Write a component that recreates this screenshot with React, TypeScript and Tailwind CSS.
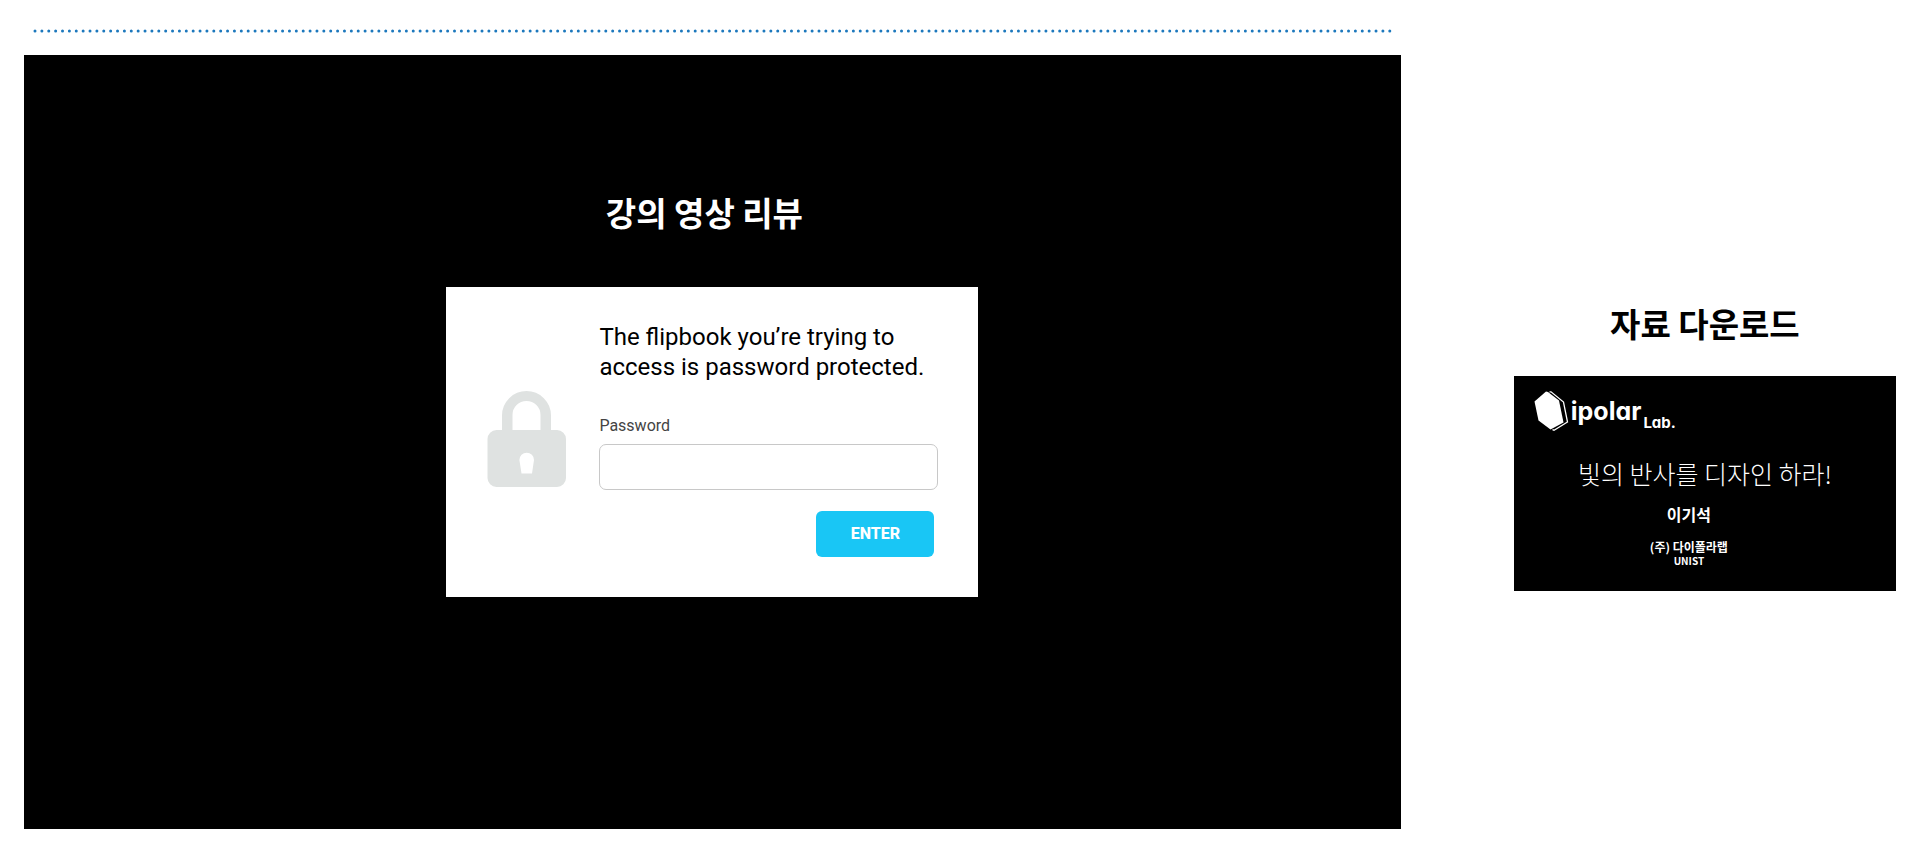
import React from "react";

function DottedRule() {
  return (
    <svg className="block h-1 w-full overflow-visible" aria-hidden="true">
      <line
        x1="0"
        y1="2"
        x2="100%"
        y2="2"
        pathLength={197}
        stroke="#1c78bd"
        strokeWidth="3"
        strokeLinecap="round"
        strokeDasharray="0 1"
      />
    </svg>
  );
}

function LockIcon() {
  return (
    <svg className="h-24 w-20 shrink-0" viewBox="0 0 80 96" fill="#dfe2e1" aria-hidden="true">
      <path
        fillRule="evenodd"
        d="M15 39V24.500a24.500 24.500 0 0 1 49 0V39h6a9 9 0 0 1 9 9v39a9 9 0 0 1-9 9H9.500a9 9 0 0 1-9-9V48a9 9 0 0 1 9-9zM25.500 39h28V24a14 14 0 0 0-28 0zM34.500 82.500h10.500l2-13.500a7.300 7.300 0 1 0-14.600 0z"
      />
    </svg>
  );
}

function LogoMark() {
  return (
    <svg className="h-10 w-[35px] shrink-0" viewBox="0 0 35 40" aria-hidden="true">
      <path d="M12 0.500L0.500 10.500L4.500 29.500L16.500 38.500L29.500 31.500L25 9.500L14 1z" fill="#fff" />
      <path d="M15.500 0.800L17 0.800L29.500 11L33.500 31L20 39.200L18.500 38.600" fill="none" stroke="#fff" strokeWidth="1.300" />
    </svg>
  );
}

function PasswordCard() {
  return (
    <form
      className="flex w-full max-w-[532px] items-end gap-8 bg-white pt-[35px] pr-10 pb-10 pl-[41px] font-[Roboto,sans-serif]"
      onSubmit={(e) => e.preventDefault()}
    >
      <div className="pb-[70px]">
        <LockIcon />
      </div>
      <div className="flex grow flex-col">
        <h2 className="text-2xl leading-[30px] font-[450] text-black">
          The flipbook you’re trying to
          <br />
          access is password protected.
        </h2>
        <label htmlFor="password" className="mt-8 text-base leading-6 text-[#444]">
          Password
        </label>
        <input
          id="password"
          type="password"
          className="mt-1.5 h-[46px] w-full rounded-[7px] border border-[#c8c8c8] bg-white px-3 outline-none"
        />
        <button
          type="submit"
          className="mt-[21px] mr-1 h-[46px] w-[118px] self-end rounded-md bg-[#19c6f5] text-base font-extrabold text-white"
        >
          ENTER
        </button>
      </div>
    </form>
  );
}

function DownloadCard() {
  return (
    <a href="#download" className="block aspect-video w-full bg-black px-5 pt-[15px] text-white">
      <div className="flex font-[Inter,sans-serif] font-bold [font-feature-settings:'cv11']">
        <LogoMark />
        <span className="mt-1 ml-0.5 text-[25px] leading-8">ipolar</span>
        <span className="mt-5 ml-0.5 text-[15px] leading-6">Lab.</span>
      </div>
      <div className="mt-[22px] text-center text-[25px] leading-8 font-light">빛의 반사를 디자인 하라!</div>
      <div className="flex flex-col items-center pr-8 font-bold">
        <span className="mt-[13px] text-base leading-6">이기석</span>
        <span className="mt-[13px] text-xs leading-4">(주) 다이폴라랩</span>
        <span className="text-[10px] leading-3">UNIST</span>
      </div>
    </a>
  );
}

function App() {
  return (
    <main className="grid min-h-screen grid-cols-[1376fr_382fr] items-start gap-x-[113px] bg-white px-6 pt-[29px] pb-4 font-['Noto_Sans_CJK_KR',sans-serif]">
      <section className="flex flex-col">
        <div className="px-[11px]">
          <DottedRule />
        </div>
        <div className="mt-[22px] flex aspect-video w-full flex-col items-center bg-black pt-[133px]">
          <h1 className="pr-4 text-[33px] leading-[48px] font-bold text-white">강의 영상 리뷰</h1>
          <div className="mt-[51px] flex w-full justify-center">
            <PasswordCard />
          </div>
        </div>
      </section>
      <section className="flex flex-col items-center pt-[270px]">
        <h1 className="text-[33px] leading-[48px] font-bold text-black">자료 다운로드</h1>
        <div className="mt-[29px] w-full">
          <DownloadCard />
        </div>
      </section>
    </main>
  );
}

export default App;
